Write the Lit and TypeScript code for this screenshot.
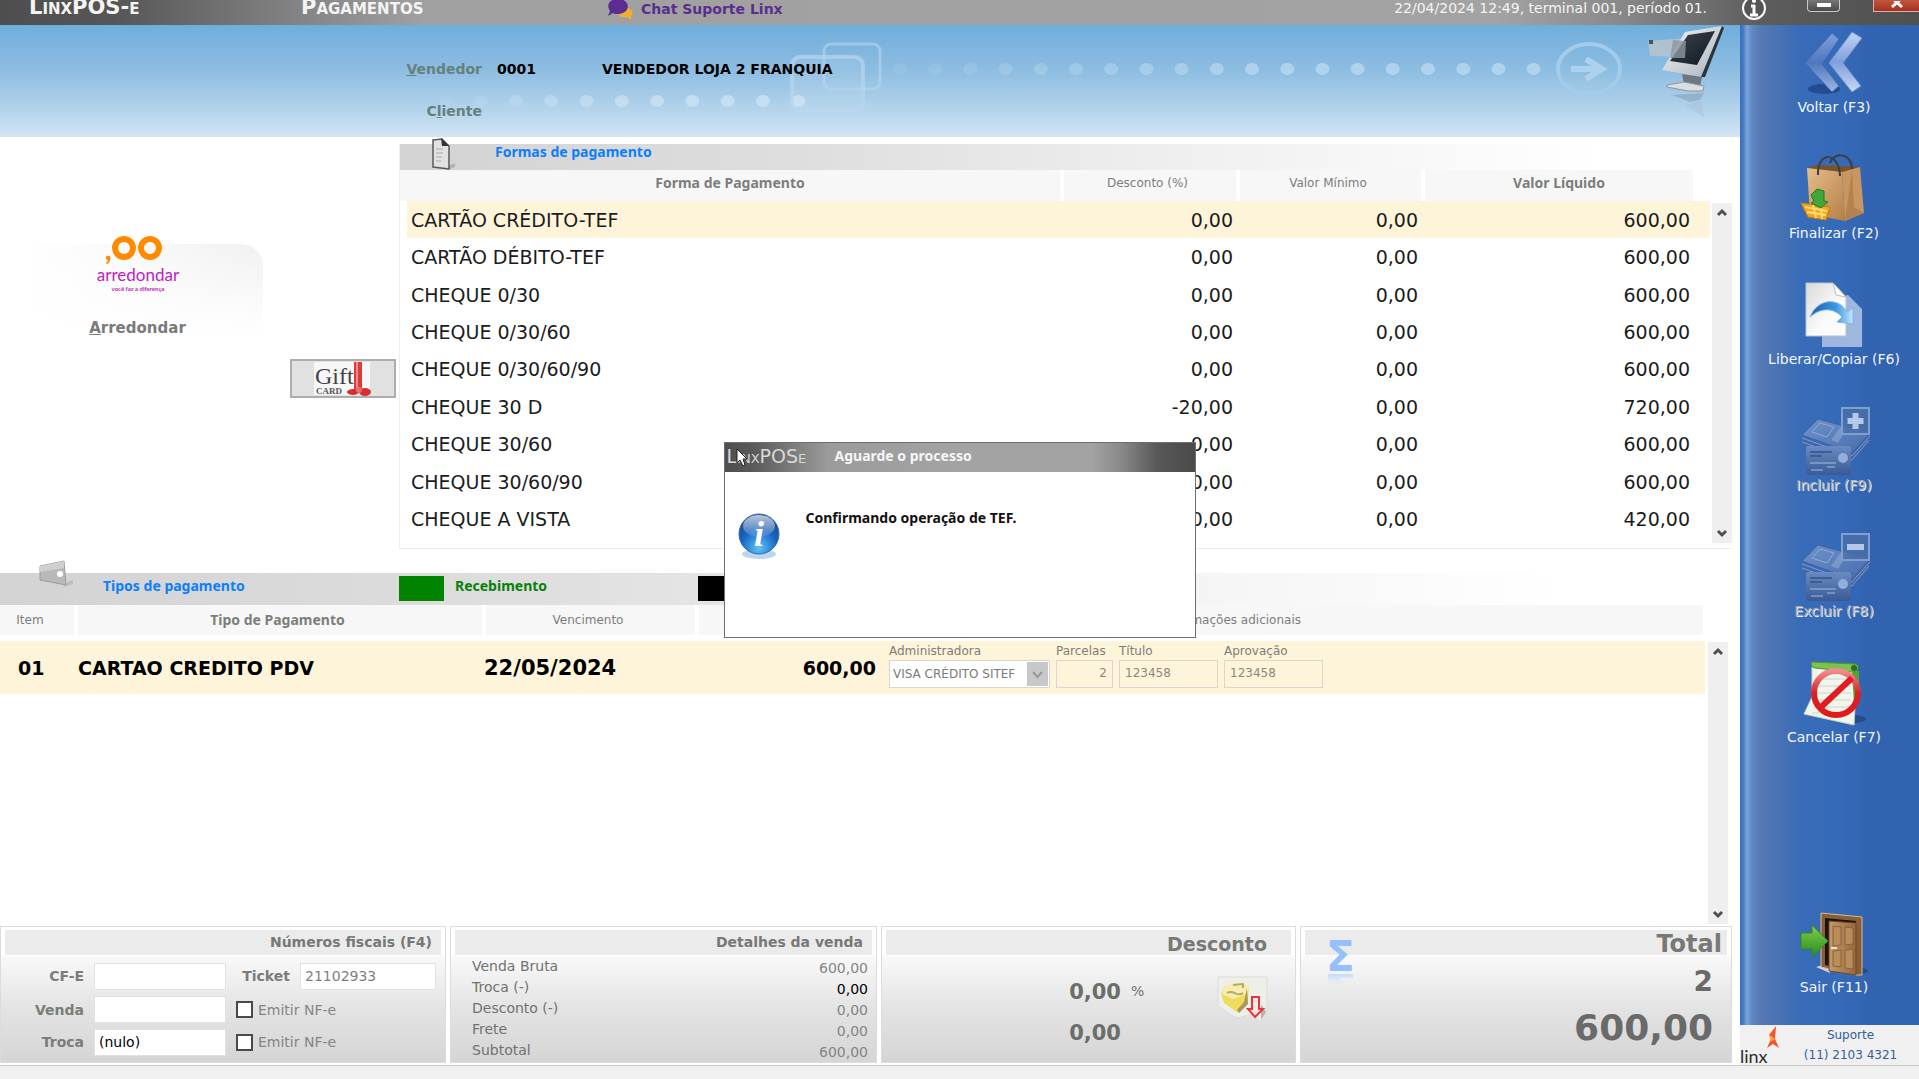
import { LitElement, html, css, svg, nothing } from "lit";
import { customElement, property } from "lit/decorators.js";
import { classMap } from "lit/directives/class-map.js";

interface PaymentForm {
  name: string;
  discount: string;
  min: string;
  net: string;
}

const FORMS: PaymentForm[] = [
  { name: "CARTÃO CRÉDITO-TEF", discount: "0,00", min: "0,00", net: "600,00" },
  { name: "CARTÃO DÉBITO-TEF", discount: "0,00", min: "0,00", net: "600,00" },
  { name: "CHEQUE 0/30", discount: "0,00", min: "0,00", net: "600,00" },
  { name: "CHEQUE 0/30/60", discount: "0,00", min: "0,00", net: "600,00" },
  { name: "CHEQUE 0/30/60/90", discount: "0,00", min: "0,00", net: "600,00" },
  { name: "CHEQUE 30 D", discount: "-20,00", min: "0,00", net: "720,00" },
  { name: "CHEQUE 30/60", discount: "0,00", min: "0,00", net: "600,00" },
  { name: "CHEQUE 30/60/90", discount: "0,00", min: "0,00", net: "600,00" },
  { name: "CHEQUE A VISTA", discount: "0,00", min: "0,00", net: "420,00" },
];

const SALE = [
  { label: "Venda Bruta", value: "600,00", strong: false },
  { label: "Troca (-)", value: "0,00", strong: true },
  { label: "Desconto (-)", value: "0,00", strong: false },
  { label: "Frete", value: "0,00", strong: false },
  { label: "Subtotal", value: "600,00", strong: false },
];

const moneyStack = (sign: unknown) => svg`
  <defs>
    <linearGradient id="bill" x1="0" y1="0" x2="1" y2="1">
      <stop offset="0" stop-color="#7093c9"/><stop offset="1" stop-color="#466cae"/>
    </linearGradient>
    <linearGradient id="cc" x1="0" y1="0" x2="0" y2="1">
      <stop offset="0" stop-color="#6a8ac2"/><stop offset="1" stop-color="#3a5a96"/>
    </linearGradient>
  </defs>
  <path d="M16 34 L64 46 L83 28 L83 36 L64 54 L50 54 L16 42 Z" fill="#4367a6"/>
  <path d="M16 28 L32 12 L84 26 L66 46 Z" fill="url(#bill)" stroke="#3f64a4"/>
  <path d="M16 31 L66 49 L84 29 M16 35 L66 53 L83 33" fill="none" stroke="#7f9ccc" stroke-width="1"/>
  <path d="M26 25 L34 16 L48 20 L41 30 Z" fill="none" stroke="#8fabd8" stroke-width="1"/>
  <path d="M45 33 L56 18 L62 20 L52 36 Z" fill="#a5bce2" opacity=".4"/>
  <rect x="20" y="39" width="45" height="29" rx="2" fill="url(#cc)"/>
  <path d="M24 45h22M24 49h12" stroke="#3d5d99" stroke-width="2"/>
  <path d="M24 56h26M25 63h12M41 60h8" stroke="#a4bbe1" stroke-width="1"/>
  <circle cx="57" cy="51" r="5" fill="#92aedb"/>
  <rect x="56" y="1" width="27" height="26" fill="#4a6fa8" fill-opacity=".8" stroke="#7f9fd1" stroke-width="2"/>
  ${sign}`;

const ICONS: Record<string, unknown> = {
  voltar: svg`
    <defs>
      <linearGradient id="chA" x1="0" y1="0" x2="0" y2="1">
        <stop offset="0" stop-color="#7ea0dc"/><stop offset=".5" stop-color="#5076bf"/><stop offset="1" stop-color="#9db6e4"/>
      </linearGradient>
      <linearGradient id="chB" x1="0" y1="0" x2="0" y2="1">
        <stop offset="0" stop-color="#c3d4f3"/><stop offset=".5" stop-color="#7f9fdc"/><stop offset="1" stop-color="#c9d8f5"/>
      </linearGradient>
    </defs>
    <ellipse cx="38" cy="60" rx="16" ry="5" fill="#1d3f7c" opacity=".7"/>
    <path d="M46 4 L53 10 L36 35 L53 57 L46 63 L19 34 Z" fill="url(#chA)" stroke="#4469ae" stroke-width="1"/>
    <path d="M66 3 L76 9 L57 34 L75 57 L66 63 L43 34 Z" fill="url(#chB)" stroke="#6f90cf" stroke-width="1"/>`,
  finalizar: svg`
    <defs>
      <linearGradient id="bag" x1="0" y1="0" x2="1" y2="1">
        <stop offset="0" stop-color="#e6bd8a"/><stop offset="1" stop-color="#b57f47"/>
      </linearGradient>
    </defs>
    <path d="M21 13 L30 10 L74 12 L58 17 Z" fill="#7d5326"/>
    <path d="M21 13 L56 17 L59 66 L24 59 Z" fill="url(#bag)"/>
    <path d="M56 17 L74 12 L78 58 L59 66 Z" fill="#c99560"/>
    <path d="M66 15 L68 52 L78 58 L59 66 Z" fill="#a9753f" opacity=".6"/>
    <path d="M32 20 C31 -4 53 -4 54 21" fill="none" stroke="#3c3f45" stroke-width="2"/>
    <path d="M44 8 C48 -4 66 -2 66 14" fill="none" stroke="#3c3f45" stroke-width="2"/>
    <path d="M15 48 L44 52 L40 65 L22 62 Z" fill="#f5a61d" stroke="#cf7d08"/>
    <path d="M19 52 L41 56 M21 57 L40 60 M27 50 L30 63 M35 51 L36 64" stroke="#ffdc74" stroke-width="2"/>
    <path d="M25 40 L31 34 L38 36 L38 46 L42 47 L35 53 L25 48 L28 46 Z" fill="#43a63a" stroke="#237a20" stroke-width="1"/>`,
  liberar: svg`
    <defs>
      <linearGradient id="pg" x1="0" y1="0" x2="1" y2="1">
        <stop offset="0" stop-color="#d9d9d9"/><stop offset=".6" stop-color="#fbfbfb"/>
      </linearGradient>
      <linearGradient id="sw" x1="0" y1="0" x2="1" y2="0">
        <stop offset="0" stop-color="#1c5fa5"/><stop offset=".6" stop-color="#3a98e4"/><stop offset="1" stop-color="#c7e6fb"/>
      </linearGradient>
    </defs>
    <path d="M36 20 L62 14 L76 28 L76 66 L36 66 Z" fill="#9db7df"/>
    <path d="M20 2 L47 2 L60 16 L60 55 L20 55 Z" fill="url(#pg)" stroke="#b9c3d2" stroke-width="1"/>
    <path d="M47 2 L50 14 L60 16 Z" fill="#fff" stroke="#bbb" stroke-width="1"/>
    <path d="M24 36 C32 16 54 17 61 31 L67 27 L67 43 L51 41 L56 36 C48 27 35 26 24 36 Z" fill="url(#sw)" stroke="#7fb6e4" stroke-width="1"/>`,
  incluir: moneyStack(svg`<path d="M66.500 6h6v5h5v6h-5v5h-6v-5h-5v-6h5z" fill="#b4c9ea"/>`),
  excluir: moneyStack(svg`<rect x="61" y="11" width="17" height="6" fill="#b4c9ea"/>`),
  cancelar: svg`
    <defs>
      <linearGradient id="no" x1="0" y1="0" x2="0" y2="1">
        <stop offset="0" stop-color="#f08c8c"/><stop offset=".5" stop-color="#d92027"/><stop offset="1" stop-color="#e31a1a"/>
      </linearGradient>
    </defs>
    <ellipse cx="66" cy="60" rx="14" ry="4" fill="#244b8b"/>
    <path d="M26 8 L71 12 L68 66 L18 55 L26 38 Z" fill="#f2f5ec" stroke="#c9d2c1" stroke-width="1"/>
    <path d="M66 12 L73 12 L73 42 L68 46 Z" fill="#55a332"/>
    <path d="M27 3 C24 2 25 9 29 9 L66 13 C73 12 74 6 69 5 Z" fill="#7cc24c" stroke="#4c9330" stroke-width="1"/>
    <circle cx="68" cy="9" r="3" fill="#2f6d1e"/>
    <path d="M32 20h32M32 27h33M32 34h33M31 41h34M28 48h36M26 54h38" stroke="#ccd6c6" stroke-width="1"/>
    <ellipse cx="50" cy="34" rx="22" ry="22" fill="none" stroke="url(#no)" stroke-width="6"/>
    <path d="M34 49 L66 19" stroke="#e01d22" stroke-width="6"/>`,
  sair: svg`
    <defs>
      <linearGradient id="door" x1="0" y1="0" x2="1" y2="0">
        <stop offset="0" stop-color="#c59a6b"/><stop offset="1" stop-color="#94683c"/>
      </linearGradient>
      <linearGradient id="go" x1="0" y1="0" x2="0" y2="1">
        <stop offset="0" stop-color="#7fd04c"/><stop offset="1" stop-color="#2a8a1e"/>
      </linearGradient>
    </defs>
    <path d="M30 58 L44 54 L44 64 Z" fill="#cfd5de"/>
    <ellipse cx="74" cy="62" rx="8" ry="3" fill="#244b8b"/>
    <path d="M35 4 L76 8 L76 66 L70 66 L44 60 L35 58 Z" fill="#8a5f38" stroke="#d8b995" stroke-width="1"/>
    <path d="M39 9 L70 12 L70 62 L39 56 Z" fill="#1b120b"/>
    <path d="M43 12 L70 14 L70 66 L43 62 Z" fill="url(#door)" stroke="#6d4827" stroke-width="1"/>
    <path d="M47 17l8 1v18l-8 1zM59 18l8 1v16l-8 1zM47 42l8-1v17l-8-1zM59 41l8-1v20l-8-1z" fill="#b98c5c" stroke="#8d6237" stroke-width="1"/>
    <path d="M45 39l6 0" stroke="#f0e0c0" stroke-width="2"/>
    <path d="M15 24 L26 24 L26 16 L42 32 L26 48 L26 40 L15 40 Z" fill="url(#go)" stroke="#36881f" stroke-width="1"/>`,
};

@customElement("side-action")
export class SideAction extends LitElement {
  @property() icon = "";
  @property() label = "";
  @property({ type: Boolean }) disabled = false;

  static styles = css`
    :host {
      display: block;
    }
    .action {
      display: flex;
      flex-direction: column;
      align-items: center;
      width: 100%;
      padding: 0;
      border: 0;
      background: none;
      color: #f2f6fc;
      font: 14px/20px "DejaVu Sans", sans-serif;
      white-space: nowrap;
    }
    .glyph {
      width: 96px;
      height: 68px;
      overflow: visible;
    }
    .action:disabled {
      color: #a9aeb8;
      text-shadow: 1px 1px 0 #f0f0f0;
    }
  `;

  render() {
    return html`<button class="action" ?disabled=${this.disabled}>
      <svg class="glyph" viewBox="0 0 96 68" aria-hidden="true">${ICONS[this.icon]}</svg>
      <span>${this.label}</span>
    </button>`;
  }
}

@customElement("scroll-track")
export class ScrollTrack extends LitElement {
  static styles = css`
    :host {
      display: flex;
      flex-direction: column;
      justify-content: space-between;
      width: 20px;
      background: #efefef;
    }
    .arrow {
      width: 20px;
      height: 20px;
      padding: 0;
      border: 0;
      background: none;
      line-height: 0;
    }
  `;

  render() {
    return html`
      <button class="arrow" aria-label="Rolar para cima">
        <svg width="20" height="20"><path d="M6 12 L10 8 L14 12" fill="none" stroke="#505050" stroke-width="3" /></svg>
      </button>
      <button class="arrow" aria-label="Rolar para baixo">
        <svg width="20" height="20"><path d="M6 8 L10 12 L14 8" fill="none" stroke="#505050" stroke-width="3" /></svg>
      </button>
    `;
  }
}

@customElement("app-root")
export class AppRoot extends LitElement {
  static styles = css`
    :host {
      --wide: "DejaVu Sans", sans-serif;
      --narrow: "Noto Sans", "Open Sans", sans-serif;
      --grey: #6f726f;
      --cream: #fef4d9;
      display: flex;
      flex-direction: column;
      position: relative;
      min-height: 100vh;
      overflow: hidden;
      background: #fff;
      color: var(--grey);
      font: 14px/20px var(--wide);
    }
    * {
      box-sizing: border-box;
    }
    button {
      font: inherit;
    }

    /* window caption */
    .caption {
      display: grid;
      grid-template-columns: 272px 306px 1fr auto;
      align-items: start;
      height: 25px;
      padding-left: 29px;
      background: linear-gradient(90deg, #4e4e4e 0, #565656 6%, #787878 13%, #a0a0a0 22%, #a3a3a3 78%, #8b8b8b 84%, #5c5c5c 92%, #505050 100%);
      color: #f4f4f4;
      line-height: 17px;
    }
    .brand {
      font-size: 21px;
      font-weight: bold;
      font-variant: small-caps;
      line-height: 15px;
    }
    .chat {
      display: flex;
      gap: 8px;
      color: #5c2d91;
      font-weight: bold;
      line-height: 19px;
      text-decoration: none;
    }
    .chat svg {
      width: 26px;
      height: 20px;
    }
    .status {
      display: flex;
      align-items: start;
    }
    .status-text {
      margin-right: 34px;
    }
    .info {
      width: 26px;
      height: 21px;
      margin-right: 40px;
    }
    .win {
      height: 12px;
      padding: 0;
      border: 1px solid #c9c9c9;
      border-top: 0;
      background: linear-gradient(#777, #4a4a4a);
      line-height: 0;
    }
    .win svg {
      display: block;
      margin: 0 auto;
    }
    .minimise {
      width: 33px;
      margin-right: 33px;
      border-radius: 0 0 4px 4px;
    }
    .close {
      width: 46px;
      border-right: 0;
      border-color: #d9b0a8;
      background: linear-gradient(#c4553f, #a5301d);
    }

    .body {
      display: grid;
      grid-template-columns: minmax(0, 1fr) 179px;
      flex: 1;
    }
    .main {
      display: flex;
      flex-direction: column;
      min-width: 0;
    }

    /* blue header */
    .hero {
      position: relative;
      display: grid;
      grid-template-columns: 482px 90px 1fr;
      grid-template-rows: 44px 39px;
      align-items: center;
      column-gap: 15px;
      height: 112px;
      padding-top: 22px;
      background: linear-gradient(#6faedc, #8dbde1 40%, #b3d3eb 75%, #d3e5f3);
      color: #000;
      font-weight: bold;
    }
    .hero-art {
      position: absolute;
      inset: 0;
      width: 100%;
      height: 100%;
    }
    .hero-label {
      position: relative;
      color: #66807f;
      text-align: right;
    }
    .hero-value {
      position: relative;
    }

    /* payment forms */
    .upper {
      display: grid;
      grid-template-columns: 399px minmax(0, 1fr);
      padding: 7px 8px 24px 0;
    }
    .left {
      display: flex;
      flex-direction: column;
    }
    .round-card {
      display: flex;
      flex-direction: column;
      align-items: center;
      width: 263px;
      height: 100px;
      margin-top: 100px;
      padding: 0 0 0 12px;
      border: 0;
      border-radius: 0 22px 0 0;
      background: linear-gradient(rgba(255, 255, 255, 0), #fff 90%), linear-gradient(90deg, #fff 10%, #f1f1f1);
      color: #7a7a7a;
      font-size: 15px;
      font-weight: bold;
    }
    .round-logo {
      width: 96px;
      height: 62px;
      margin-top: -13px;
      margin-bottom: 25px;
      overflow: visible;
    }
    .gift {
      align-self: end;
      width: 106px;
      height: 39px;
      margin: 15px 3px 0 0;
      padding: 0;
      border: 2px solid #adadad;
      background: #e1e1e1;
    }
    .gift svg {
      display: block;
      margin: 0 auto;
    }
    .section-title {
      margin: 0;
      color: #0d7eff;
      font: bold 14px/15px var(--narrow);
    }
    .bar {
      display: flex;
      background: linear-gradient(90deg, #d3d3d3, #dedede 30%, #f0f0f0 60%, #fff 90%);
    }
    .forms {
      border-left: 1px solid #eee;
      border-bottom: 1px solid #ececec;
      padding-bottom: 10px;
    }
    .forms-bar {
      height: 26px;
      padding-left: 31px;
    }
    .forms-bar svg {
      width: 26px;
      height: 34px;
      margin: -7px 38px 0 0;
    }
    .forms-body {
      display: flex;
    }
    table {
      border-collapse: collapse;
      table-layout: fixed;
    }
    th {
      padding: 0;
      border-right: 4px solid #fff;
      background: #f7f7f7;
      color: #7b7e7b;
      font: 12px/20px var(--wide);
    }
    th.strong {
      font: bold 14px/20px var(--narrow);
    }
    .forms-table {
      flex: 1;
      width: 100%;
      height: 368px;
      color: #1c1c1c;
      font-size: 19px;
    }
    .forms-table th {
      height: 31px;
      padding: 0 5px 6px 0;
    }
    .forms-table th.strong {
      padding-right: 0;
    }
    .forms-table th.blank {
      background: none;
    }
    .forms-table td {
      height: 37px;
      padding: 0 5px 0 11px;
      text-align: right;
    }
    .forms-table td:first-child {
      text-align: left;
    }
    .selected td {
      background: var(--cream);
    }
    .forms-table .selected td:first-child {
      background: linear-gradient(90deg, #fff 7px, var(--cream) 7px);
    }
    .forms-body scroll-track {
      margin: 33px 0 -5px;
    }
    .w-discount {
      width: 176px;
    }
    .w-min {
      width: 185px;
    }
    .w-net {
      width: 272px;
    }
    .w-blank {
      width: 15px;
    }

    /* payment types */
    .lower {
      display: flex;
      flex-direction: column;
      flex: 1;
      padding-right: 8px;
    }
    .types-bar {
      height: 32px;
      padding-left: 39px;
    }
    .types-bar svg {
      width: 36px;
      height: 28px;
      margin: -13px 28px 0 0;
    }
    .types-bar .section-title {
      width: 296px;
      line-height: 26px;
    }
    .received {
      width: 243px;
      color: #0a800a;
      font: bold 14px/26px var(--narrow);
    }
    .swatch {
      width: 45px;
      height: 25px;
      margin: 3px 11px 0 0;
      background: #008400;
    }
    .swatch.black {
      background: #000;
    }
    .types-body {
      display: flex;
      flex: 1;
      align-items: start;
      padding-right: 4px;
    }
    .types-table {
      flex: 1;
      width: 100%;
      color: #000;
    }
    .types-table th {
      height: 30px;
      padding-right: 5px;
    }
    .types-table th:first-child {
      padding-right: 14px;
    }
    .types-table td {
      height: 53px;
      padding: 0 0 0 2px;
      font-size: 19px;
      font-weight: bold;
      white-space: nowrap;
    }
    .types-table td.date {
      padding-left: 0;
      font-size: 21px;
    }
    .types-table tbody::before {
      content: "";
      display: block;
      height: 6px;
    }
    .types-table td.item {
      padding-left: 18px;
    }
    .types-table td.value {
      padding-right: 13px;
      text-align: right;
    }
    .types-table td.more {
      padding: 1px 0 0;
      vertical-align: top;
    }
    .types-table th.more {
      padding-left: 272px;
      text-align: left;
    }
    .types-body scroll-track {
      align-self: stretch;
      margin: 37px 0 2px 1px;
    }
    .w-item {
      width: 76px;
    }
    .w-type {
      width: 408px;
    }
    .w-due {
      width: 213px;
    }
    .w-value {
      width: 192px;
    }
    .extra {
      display: flex;
      gap: 6px;
      color: #7d7d78;
      font: 12px/18px var(--wide);
    }
    .cell {
      display: flex;
      flex-direction: column;
    }
    .cell input,
    .pick {
      height: 28px;
      border: 1px solid #ddd5d3;
      background: none;
      color: #8a8880;
      font: 12px/18px var(--wide);
    }
    .cell input {
      width: 99px;
      padding: 0 5px 2px;
    }
    .cell .short {
      width: 57px;
      text-align: right;
    }
    .pick {
      display: flex;
      width: 161px;
      padding: 1px;
      background: #fff;
    }
    .pick select {
      flex: 1;
      min-width: 0;
      padding: 0 2px;
      border: 0;
      appearance: none;
      background: none;
      color: #7a7a7a;
      font: 12px/18px var(--wide);
      opacity: 1;
    }
    .pick svg {
      width: 21px;
      height: 24px;
      background: #c8c8c8;
    }

    /* totals */
    .panels {
      display: grid;
      grid-template-columns: 446fr 427fr 415fr 432fr;
      gap: 4px;
      height: 139px;
      padding: 0 8px 2px 0;
    }
    .panel {
      display: flex;
      flex-direction: column;
      min-width: 0;
      border: 1px solid #dcdcdc;
      background: linear-gradient(#fff 28px, #f9f9f9 29px, #e4e4e4 80px, #d5d5d5);
    }
    .panel-title {
      height: 25px;
      margin: 3px 4px 0;
      padding-right: 9px;
      background: #ebebeb;
      color: #767976;
      font-size: 14px;
      line-height: 25px;
      text-align: right;
    }
    .fiscal {
      display: grid;
      grid-template-columns: 83px 132px 54px 1fr;
      grid-template-rows: 28px 27px 26px;
      gap: 6px 10px;
      align-items: center;
      padding: 7px 9px 0 0;
    }
    .fiscal > label {
      font-weight: bold;
      text-align: right;
      color: #7a7d7a;
    }
    .fiscal input[type="text"] {
      width: 100%;
      height: 27px;
      padding: 0 4px;
      border: 1px solid #e2e2e2;
      background: #fff;
      color: #000;
      font: 14px/20px var(--wide);
    }
    .fiscal input.muted {
      color: #7f7f7f;
    }
    .fiscal .ticket {
      white-space: nowrap;
    }
    .fiscal > .emit {
      grid-column: span 2;
      display: flex;
      align-items: center;
      gap: 5px;
      font-weight: normal;
      color: #838683;
    }
    .emit input {
      appearance: none;
      width: 17px;
      height: 17px;
      margin: 0;
      border: 2px solid #4a4a4a;
      background: #fff;
    }
    .sale {
      display: flex;
      flex-direction: column;
      margin: 0;
      padding: 1px 8px 0 21px;
    }
    .sale-row {
      display: flex;
      justify-content: space-between;
      height: 21px;
      line-height: 21px;
    }
    .sale-row dd {
      margin: 2px 0 0;
      color: #858585;
    }
    .sale-row dd.on {
      color: #000;
    }
    .panel-title.mid {
      padding-right: 24px;
      font-size: 19px;
      line-height: 29px;
    }
    .discount {
      display: grid;
      grid-template-columns: 1fr 76px 60px;
      align-items: center;
      column-gap: 10px;
      padding: 17px 18px 0 0;
    }
    .big {
      color: #6c6e6c;
      font-size: 21px;
      font-weight: bold;
      line-height: 41px;
      text-align: right;
    }
    .unit {
      padding-bottom: 4px;
    }
    .note {
      grid-row: span 2;
      width: 52px;
      height: 52px;
      margin-top: 4px;
      padding: 0;
      border: 0;
      background: none;
      align-self: start;
    }
    .total .panel-title {
      display: flex;
      justify-content: space-between;
      padding: 0 5px 0 20px;
      font-size: 24px;
      line-height: 28px;
    }
    .sigma {
      width: 32px;
      height: 56px;
      flex: none;
    }
    .sums {
      padding: 2px 18px 0 0;
      color: #6a6a6a;
      font-weight: bold;
      text-align: right;
    }
    .count {
      font-size: 28px;
      line-height: 50px;
    }
    .amount {
      font-size: 36px;
      line-height: 42px;
    }

    /* side bar */
    .side {
      display: flex;
      flex-direction: column;
    }
    .actions {
      display: flex;
      flex-direction: column;
      flex: 1;
      gap: 38px;
      padding: 4px 0 28px 9px;
      background: linear-gradient(90deg, #3b6fbb 0, #4379c4 3px, #7ba4d9 7px, #5f88c2 12px, #5679b3 20px, #4470b3 45px, #386cb9 60px, #356ab8 100px, #3163b0 130px);
    }
    .exit {
      margin-top: auto;
    }
    .support {
      display: grid;
      grid-template-columns: 44px 1fr;
      height: 40px;
      background: #f0f0f0;
      color: #31609c;
      font-size: 12px;
      line-height: 20px;
      text-align: center;
    }
    .support svg {
      width: 44px;
      height: 40px;
    }
    .support-text {
      display: flex;
      flex-direction: column;
      padding-right: 2px;
    }
    .foot {
      height: 14px;
      border-top: 1px solid #c9c9c9;
      background: #f0f0f0;
    }

    /* progress window */
    .overlay {
      position: absolute;
      inset: 0;
      display: grid;
      place-items: center;
    }
    .dialog {
      position: relative;
      width: 472px;
      height: 196px;
      border: 1px solid #6e6e6e;
      background: #fff;
      color: #111;
      font: bold 14px/20px var(--narrow);
    }
    .dialog-head {
      display: grid;
      grid-template-columns: 108px 1fr;
      align-items: center;
      height: 29px;
      padding: 0 0 3px 2px;
      background: linear-gradient(90deg, #4d4d4d 0, #5a5a5a 6%, #9b9b9b 22%, #a3a3a3 50%, #a3a3a3 78%, #8a8a8a 84%, #585858 92%, #4a4a4a 100%);
      color: #f6f6f6;
    }
    .mini-brand {
      color: #d8d8d8;
      font: small-caps 19px/20px var(--wide);
    }
    .dialog-body {
      display: flex;
      align-items: start;
      gap: 25px;
      padding: 40px 12px;
    }
    .dialog-body p {
      margin: -4px 0 0;
    }
    .cursor {
      position: absolute;
      left: 11px;
      top: 5px;
    }
  `;

  private caption() {
    return html`<header class="caption">
      <span class="brand">LinxPOS-e</span>
      <span class="brand">Pagamentos</span>
      <a class="chat" href="#chat">
        <svg viewBox="0 0 26 20" aria-hidden="true">
          <path d="M16 8 C24 6 28 13 24 16 L24 20 L20 17 C14 18 11 16 12 13 Z" fill="#efb02b" />
          <path d="M11 -1 C24 -1 24 13 12 14 C9 14 7 14 6 13 L1 16 L3 11 C-1 5 2 -1 11 -1 Z" fill="#5c2d91" />
        </svg>
        Chat Suporte Linx
      </a>
      <div class="status">
        <span class="status-text">22/04/2024 12:49, terminal 001, período 01.</span>
        <svg class="info" viewBox="0 0 26 21" aria-hidden="true">
          <ellipse cx="13" cy="8" rx="11" ry="11" fill="#555" stroke="#fff" stroke-width="2" />
          <path d="M13 5v10M10 6h4M9 15h8" stroke="#fff" stroke-width="3" />
          <circle cx="13" cy="1" r="2" fill="#fff" />
        </svg>
        <button class="win minimise" aria-label="Minimizar">
          <svg width="14" height="10"><rect x="0" y="2" width="14" height="4" fill="#fff" /></svg>
        </button>
        <button class="win close" aria-label="Fechar">
          <svg width="16" height="10"><path d="M3 -3 L13 6 M13 -3 L3 6" stroke="#fff" stroke-width="3" /></svg>
        </button>
      </div>
    </header>`;
  }

  private hero() {
    const top = Array.from({ length: 19 }, (_, i) => 900 + i * 35.2);
    const low = Array.from({ length: 12 }, (_, i) => 410 + i * 35.3);
    return html`<section class="hero">
      <svg class="hero-art" viewBox="0 0 1740 112" preserveAspectRatio="none" aria-hidden="true">
        <defs>
          <linearGradient id="bezel" x1="0" y1="0" x2="1" y2="1">
            <stop offset="0" stop-color="#f4f6f8" /><stop offset="1" stop-color="#aab3bb" />
          </linearGradient>
          <linearGradient id="screen" x1="0" y1="0" x2="1" y2="1">
            <stop offset="0" stop-color="#3c4650" /><stop offset="1" stop-color="#101820" />
          </linearGradient>
        </defs>
        ${top.map((x, i) => svg`<ellipse cx=${x} cy="44" rx="7" ry="6" fill="#b9d8f0" opacity=${Math.min(0.8, 0.15 + i * 0.06)} />`)}
        ${low.map((x, i) => svg`<ellipse cx=${x} cy="76" rx="7" ry="6" fill="#cfe4f5" opacity=${Math.min(0.7, i * 0.11)} />`)}
        <rect x="792" y="32" width="71" height="57" rx="8" fill="#fff" fill-opacity=".08" stroke="#b7d6ef" stroke-opacity=".7" stroke-width="4" />
        <rect x="824" y="19" width="56" height="45" rx="7" fill="none" stroke="#b7d6ef" stroke-opacity=".6" stroke-width="3" />
        <ellipse cx="1589" cy="44" rx="31" ry="25" fill="none" stroke="#a3cbea" stroke-width="4" />
        <path d="M1571 44h29M1586 34l16 10-16 10" fill="none" stroke="#aed2ee" stroke-width="6" />
        <path d="M1648 16 L1688 13 L1684 32 L1650 31 Z" fill="#b9c3cc" opacity=".85" />
        <rect x="1649" y="15" width="4" height="4" fill="#4a545e" />
        <path d="M1685 7 L1722 1 L1702 52 L1662 45 Z" fill="url(#bezel)" />
        <path d="M1722 1 L1724 3 L1705 52 L1701 52 Z" fill="#2b333b" />
        <path d="M1688 10 L1715 6 L1697 40 L1670 36 Z" fill="url(#screen)" />
        <path d="M1673 15 L1686 16 L1685 33 L1670 33 Z" fill="#8b969f" opacity=".8" />
        <path d="M1682 49 L1702 52 L1700 62 L1684 60 Z" fill="#6d7780" />
        <path d="M1667 60 L1684 57 L1704 61 L1703 66 L1688 66 L1667 62 Z" fill="#d8dee3" stroke="#8c959d" stroke-width="1" />
        <path d="M1672 70 L1704 68 L1700 75 L1690 77 Z" fill="#7f99ad" opacity=".5" />
        <path d="M1684 80 L1702 76 L1704 92 Z" fill="#9fb7ca" opacity=".3" />
      </svg>
      <span class="hero-label"><u>V</u>endedor</span>
      <span class="hero-value">0001</span>
      <span class="hero-value">VENDEDOR LOJA 2 FRANQUIA</span>
      <span class="hero-label">C<u>l</u>iente</span>
    </section>`;
  }

  private upper() {
    return html`<section class="upper">
      <div class="left">
        <button class="round-card">
          <svg class="round-logo" viewBox="0 0 96 62" aria-hidden="true">
            <text x="15" y="29" font-family="Lato, sans-serif" font-weight="900" font-size="28" fill="#ff8a00">,</text>
            <ellipse cx="34" cy="17" rx="9" ry="9" fill="none" stroke="#ff8a00" stroke-width="6" />
            <ellipse cx="60" cy="17" rx="9" ry="9" fill="none" stroke="#ff8a00" stroke-width="6" />
            <text x="48" y="50" text-anchor="middle" font-family="Lato, sans-serif" font-weight="400" font-size="17" fill="#c01cc0">arredondar</text>
            <text x="48" y="60" text-anchor="middle" font-family="Lato, sans-serif" font-weight="700" font-size="6" fill="#c01cc0">você faz a diferença</text>
          </svg>
          <span><u>A</u>rredondar</span>
        </button>
        <button class="gift" aria-label="Gift Card">
          <svg width="60" height="35" viewBox="0 0 60 35" aria-hidden="true">
            <rect x="1" y="1" width="56" height="33" fill="#f7f7f7" />
            <text x="2" y="23" font-family="Liberation Serif, serif" font-size="24" fill="#444">Gift</text>
            <text x="3" y="33" font-family="Liberation Serif, serif" font-weight="bold" font-size="9" fill="#555">CARD</text>
            <rect x="41" y="1" width="8" height="30" fill="#dd3a3a" />
            <rect x="43" y="1" width="2" height="30" fill="#f28a8a" />
            <ellipse cx="40" cy="31" rx="6" ry="3" fill="#d62f2f" />
            <ellipse cx="52" cy="31" rx="6" ry="4" fill="#d62f2f" />
            <circle cx="46" cy="29" r="3" fill="#ef6a6a" />
          </svg>
        </button>
      </div>
      <div class="forms">
        <div class="bar forms-bar">
          <svg viewBox="0 0 26 34" aria-hidden="true">
            <path d="M15 30 L24 26 L24 30 L17 33 Z" fill="#999" opacity=".6" />
            <path d="M2 3 L11 2 L18 9 L18 32 L2 30 Z" fill="#e2e2e2" stroke="#5a5a5a" stroke-width="1.500" />
            <path d="M10 1 L11 9 L18 9 Z" fill="#333" />
            <path d="M5 12h7M5 16h7M5 20h6M5 24h5" stroke="#aaa" stroke-width="1" />
          </svg>
          <h2 class="section-title">Formas de pagamento</h2>
        </div>
        <div class="forms-body">
          <table class="forms-table">
            <colgroup><col /><col class="w-discount" /><col class="w-min" /><col class="w-net" /><col class="w-blank" /></colgroup>
            <thead>
              <tr>
                <th class="strong">Forma de Pagamento</th>
                <th>Desconto (%)</th>
                <th>Valor Mínimo</th>
                <th class="strong">Valor Líquido</th>
                <th class="blank"></th>
              </tr>
            </thead>
            <tbody>
              ${FORMS.map(
                (f, i) => html`<tr class=${classMap({ selected: i === 0 })}>
                  <td>${f.name}</td>
                  <td>${f.discount}</td>
                  <td>${f.min}</td>
                  <td>${f.net}</td>
                  <td></td>
                </tr>`
              )}
            </tbody>
          </table>
          <scroll-track></scroll-track>
        </div>
      </div>
    </section>`;
  }

  private lower() {
    return html`<section class="lower">
      <div class="bar types-bar">
        <svg viewBox="0 0 36 28" aria-hidden="true">
          <path d="M24 24 L34 20 L34 24 L26 27 Z" fill="#aaa" opacity=".5" />
          <path d="M1 6 L25 1 L27 25 L1 20 Z" fill="#b9b9b9" stroke="#9c9c9c" stroke-width="1" />
          <path d="M1 6 L25 1 L25 8 L1 12 Z" fill="#cfcfcf" />
          <circle cx="21" cy="14" r="3" fill="#fff" />
        </svg>
        <h2 class="section-title">Tipos de pagamento</h2>
        <span class="swatch"></span>
        <span class="received">Recebimento</span>
        <span class="swatch black"></span>
      </div>
      <div class="types-body">
        <table class="types-table">
          <colgroup><col class="w-item" /><col class="w-type" /><col class="w-due" /><col class="w-value" /><col /></colgroup>
          <thead>
            <tr>
              <th>Item</th>
              <th class="strong">Tipo de Pagamento</th>
              <th>Vencimento</th>
              <th>Valor</th>
              <th class="more">Informações adicionais</th>
            </tr>
          </thead>
          <tbody>
            <tr class="selected">
              <td class="item">01</td>
              <td>CARTAO CREDITO PDV</td>
              <td class="date">22/05/2024</td>
              <td class="value">600,00</td>
              <td class="more">
                <div class="extra">
                  <label class="cell">Administradora
                    <span class="pick">
                      <select disabled><option>VISA CRÉDITO SITEF</option></select>
                      <svg viewBox="0 0 21 24" aria-hidden="true"><path d="M6 10 L10.500 15 L15 10" fill="none" stroke="#999" stroke-width="2" /></svg>
                    </span>
                  </label>
                  <label class="cell">Parcelas <input class="short" value="2" readonly /></label>
                  <label class="cell">Título <input value="123458" readonly /></label>
                  <label class="cell">Aprovação <input value="123458" readonly /></label>
                </div>
              </td>
            </tr>
          </tbody>
        </table>
        <scroll-track></scroll-track>
      </div>
    </section>`;
  }

  private panels() {
    return html`<section class="panels">
      <div class="panel">
        <b class="panel-title">Números fiscais (F4)</b>
        <div class="fiscal">
          <label for="cfe">CF-E</label><input id="cfe" type="text" />
          <label class="ticket" for="ticket">Ticket</label><input id="ticket" class="muted" type="text" value="21102933" />
          <label for="venda">Venda</label><input id="venda" type="text" />
          <label class="emit"><input type="checkbox" />Emitir NF-e</label>
          <label for="troca">Troca</label><input id="troca" type="text" value="(nulo)" />
          <label class="emit"><input type="checkbox" />Emitir NF-e</label>
        </div>
      </div>
      <div class="panel">
        <b class="panel-title">Detalhes da venda</b>
        <dl class="sale">
          ${SALE.map(
            (s) => html`<div class="sale-row"><dt>${s.label}</dt><dd class=${s.strong ? "on" : nothing}>${s.value}</dd></div>`
          )}
        </dl>
      </div>
      <div class="panel">
        <b class="panel-title mid">Desconto</b>
        <div class="discount">
          <span class="big">0,00</span>
          <span class="unit">%</span>
          <button class="note" aria-label="Aplicar desconto">
            <svg width="52" height="52" viewBox="0 0 52 52" aria-hidden="true">
              <path d="M1 1h49v31L44 46 L34 38 L22 42 L16 40 L1 30Z" fill="#efefea" stroke="#dcdcd8" />
              <path d="M8 10 L24 6 L32 12 L30 28 L20 36 L7 27 L4 18 Z" fill="#f0dc5c" />
              <path d="M8 10 L24 6 L32 12 L30 18 L16 23 L5 18 Z" fill="#f8ecb0" />
              <path d="M30 12 L31 28 L22 37 L20 34 L27 26 Z" fill="#a59a58" />
              <path d="M16 9l10-1v4M10 17c6-4 11 5 16 0" fill="none" stroke="#b8aa60" stroke-width="2" />
              <path d="M44 28 L49 36 L44 44 Z" fill="#b9b5ae" />
              <path d="M35 21h7v12h4l-8 8-7-8h4z" fill="#fbe9e6" stroke="#e8343a" stroke-width="2" />
            </svg>
          </button>
          <span class="big">0,00</span>
        </div>
      </div>
      <div class="panel total">
        <b class="panel-title">
          <svg class="sigma" viewBox="0 0 32 56" aria-hidden="true">
            <defs>
              <linearGradient id="glow" x1="0" y1="0" x2="0" y2="1">
                <stop offset="0" stop-color="#a9cdfc" stop-opacity=".6" /><stop offset="1" stop-color="#d5e6fb" stop-opacity="0" />
              </linearGradient>
            </defs>
            <text x="1" y="41" font-family="DejaVu Sans, sans-serif" font-weight="bold" font-size="42" fill="#94c0fb">Σ</text>
            <path d="M3 44h25v4H14l9 8H6l-3-6z" fill="url(#glow)" />
          </svg>
          Total
        </b>
        <div class="sums">
          <div class="count">2</div>
          <div class="amount">600,00</div>
        </div>
      </div>
    </section>`;
  }

  private side() {
    return html`<aside class="side">
      <nav class="actions">
        <side-action icon="voltar" label="Voltar (F3)"></side-action>
        <side-action icon="finalizar" label="Finalizar (F2)"></side-action>
        <side-action icon="liberar" label="Liberar/Copiar (F6)"></side-action>
        <side-action icon="incluir" label="Incluir (F9)" disabled></side-action>
        <side-action icon="excluir" label="Excluir (F8)" disabled></side-action>
        <side-action icon="cancelar" label="Cancelar (F7)"></side-action>
        <side-action class="exit" icon="sair" label="Sair (F11)"></side-action>
      </nav>
      <div class="support">
        <svg viewBox="0 0 44 40" aria-hidden="true">
          <text x="0" y="38" font-family="Lato, sans-serif" font-size="18" fill="#2d2d2d">linx</text>
          <path d="M36 1 L35 14 L39 23 L33 19 L27 23 L31 14 L29 10 Z" fill="#f5552c" />
          <path d="M29 9 L35 14 L31 17 Z" fill="#f9a03a" />
        </svg>
        <div class="support-text"><span>Suporte</span><span>(11) 2103 4321</span></div>
      </div>
    </aside>`;
  }

  private dialog() {
    return html`<div class="overlay">
      <div class="dialog" role="dialog" aria-labelledby="wait">
        <div class="dialog-head">
          <span class="mini-brand">LinxPOSe</span>
          <span id="wait">Aguarde o processo</span>
        </div>
        <div class="dialog-body">
          <svg width="44" height="48" viewBox="0 0 44 48" aria-hidden="true">
            <defs>
              <radialGradient id="orb" cx=".5" cy=".85" r=".9">
                <stop offset="0" stop-color="#5fc6f7" /><stop offset=".5" stop-color="#1766c4" /><stop offset="1" stop-color="#1c3f78" />
              </radialGradient>
              <linearGradient id="gloss" x1="0" y1="0" x2="0" y2="1">
                <stop offset="0" stop-color="#fff" stop-opacity=".7" /><stop offset="1" stop-color="#fff" stop-opacity=".1" />
              </linearGradient>
            </defs>
            <ellipse cx="22" cy="42" rx="17" ry="5" fill="#a8cdee" opacity=".8" />
            <ellipse cx="22" cy="22" rx="20" ry="20" fill="url(#orb)" stroke="#3b69a5" />
            <ellipse cx="22" cy="14" rx="16" ry="11" fill="url(#gloss)" />
            <text x="22" y="34" text-anchor="middle" font-family="Liberation Serif, serif" font-style="italic" font-weight="bold" font-size="36" fill="#fff">i</text>
          </svg>
          <p>Confirmando operação de TEF.</p>
        </div>
        <svg class="cursor" width="13" height="20" viewBox="0 0 13 20" aria-hidden="true">
          <path d="M1 1 L1 15 L4 12 L7 18 L9 17 L7 11 L11 11 Z" fill="#fff" stroke="#222" stroke-width="1" />
        </svg>
      </div>
    </div>`;
  }

  render() {
    return html`
      ${this.caption()}
      <div class="body">
        <main class="main">${this.hero()} ${this.upper()} ${this.lower()} ${this.panels()}</main>
        ${this.side()}
      </div>
      <footer class="foot"></footer>
      ${this.dialog()}
    `;
  }
}
